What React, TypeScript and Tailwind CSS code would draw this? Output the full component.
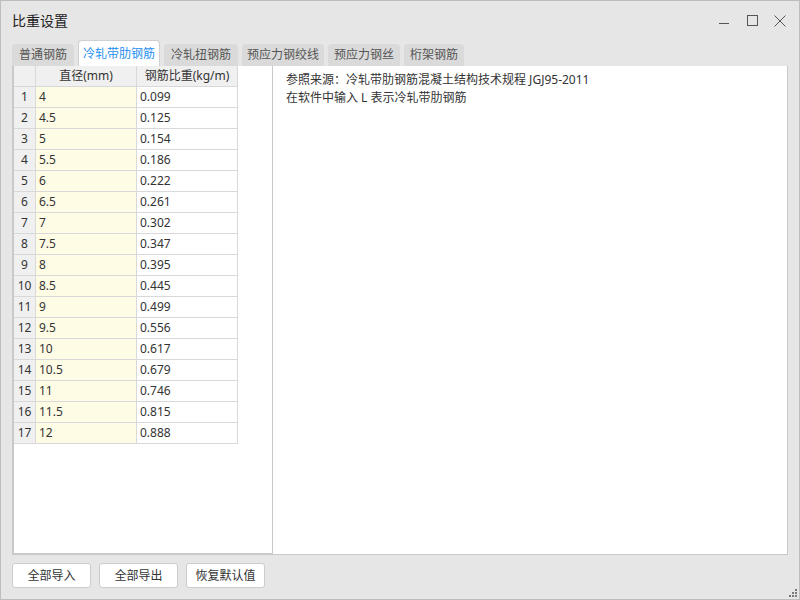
import React from "react";

const rows: [string, string][] = [
  ["4", "0.099"],
  ["4.5", "0.125"],
  ["5", "0.154"],
  ["5.5", "0.186"],
  ["6", "0.222"],
  ["6.5", "0.261"],
  ["7", "0.302"],
  ["7.5", "0.347"],
  ["8", "0.395"],
  ["8.5", "0.445"],
  ["9", "0.499"],
  ["9.5", "0.556"],
  ["10", "0.617"],
  ["10.5", "0.679"],
  ["11", "0.746"],
  ["11.5", "0.815"],
  ["12", "0.888"],
];

const tabs: { t: string; w: string }[] = [
  { t: "普通钢筋", w: "w-[62px]" },
  { t: "冷轧带肋钢筋", w: "w-[82px]" },
  { t: "冷轧扭钢筋", w: "w-[74px]" },
  { t: "预应力钢绞线", w: "w-[82px]" },
  { t: "预应力钢丝", w: "w-[72px]" },
  { t: "桁架钢筋", w: "w-[60px]" },
];

export default function App() {
  return (
    <div
      className="relative flex h-[600px] w-[800px] flex-col border border-[#bdbdbd] bg-[#e6e6e6] text-[12px] text-[#333]"
      style={{ fontFamily: '"Noto Sans", "Noto Sans CJK SC", sans-serif' }}
    >
      {/* title bar */}
      <div className="flex h-[39px] shrink-0 items-center justify-between pl-[11px] pr-[13px]">
        <div className="text-[14px] text-[#222]">比重设置</div>
        <div className="flex items-center gap-[16px] text-[#555]">
          <svg width="12" height="12" viewBox="0 0 12 12">
            <line x1="1" y1="8.5" x2="11" y2="8.5" stroke="#555" strokeWidth="1" />
          </svg>
          <svg width="12" height="12" viewBox="0 0 12 12">
            <rect x="1.5" y="0.5" width="10" height="10" fill="none" stroke="#555" strokeWidth="1" />
          </svg>
          <svg width="12" height="12" viewBox="0 0 12 12">
            <path d="M0.5 0.5 L11.5 11.5 M11.5 0.5 L0.5 11.5" stroke="#555" strokeWidth="1" />
          </svg>
        </div>
      </div>

      {/* tabs */}
      <div className="flex h-[26px] shrink-0 items-end gap-[4px] pl-[11px]">
        {tabs.map(({ t, w }, i) =>
          i === 1 ? (
            <div
              key={t}
              className={`flex h-[26px] ${w} items-center justify-center rounded-t-[4px] border border-b-0 border-[#cfcfcf] bg-white text-[#1e8ef0]`}
            >
              {t}
            </div>
          ) : (
            <div
              key={t}
              className={`flex h-[22px] ${w} items-center justify-center rounded-t-[4px] bg-[#dadada] text-[#555]`}
            >
              {t}
            </div>
          )
        )}
      </div>

      {/* content */}
      <div className="ml-[11px] flex h-[489px] w-[776px] shrink-0">
        <div className="w-[261px] border-b-2 border-l-2 border-r border-[#c9c9c9] bg-white">
          <div className="flex h-[21px] w-[224px] border-b border-[#d9d9d9] bg-[#f0f0f0]">
            <div className="w-[22px] border-r border-[#d9d9d9]" />
            <div className="flex w-[101px] items-center justify-center border-r border-[#d9d9d9]">直径(mm)</div>
            <div className="flex w-[101px] items-center justify-center border-r border-[#d9d9d9]">钢筋比重(kg/m)</div>
          </div>
          {rows.map(([d, w], i) => (
            <div key={i} className="flex h-[21px] w-[224px] border-b border-[#d9d9d9]">
              <div className="flex w-[22px] items-center justify-center border-r border-[#d9d9d9] bg-[#f0f0f0]">
                {i + 1}
              </div>
              <div className="flex w-[101px] items-center border-r border-[#d9d9d9] bg-[#fffce6] pl-[3px]">{d}</div>
              <div className="flex w-[101px] items-center border-r border-[#d9d9d9] bg-white pl-[3px]">{w}</div>
            </div>
          ))}
        </div>
        <div className="flex-1 border-b border-r border-[#c9c9c9] bg-white pl-[13px] pt-[5px] leading-[18px]">
          <div>参照来源：冷轧带肋钢筋混凝土结构技术规程 JGJ95-2011</div>
          <div>在软件中输入 L 表示冷轧带肋钢筋</div>
        </div>
      </div>

      {/* buttons */}
      <div className="mt-[8px] flex gap-[8px] pl-[11px]">
        {["全部导入", "全部导出", "恢复默认值"].map((b) => (
          <div
            key={b}
            className="flex h-[25px] w-[79px] items-center justify-center rounded-[3px] border border-[#cccccc] bg-white text-[#333]"
          >
            {b}
          </div>
        ))}
      </div>

      {/* resize grip */}
      <svg className="absolute bottom-[1px] right-[1px]" width="10" height="10" viewBox="0 0 10 10">
        <rect x="7" y="1" width="2" height="2" fill="#777" />
        <rect x="4" y="4" width="2" height="2" fill="#777" />
        <rect x="7" y="4" width="2" height="2" fill="#777" />
        <rect x="1" y="7" width="2" height="2" fill="#777" />
        <rect x="4" y="7" width="2" height="2" fill="#777" />
        <rect x="7" y="7" width="2" height="2" fill="#777" />
      </svg>
    </div>
  );
}
